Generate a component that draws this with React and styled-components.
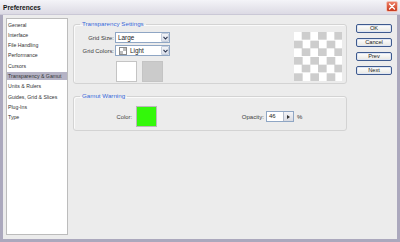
import React from 'react';
import styled, { createGlobalStyle } from 'styled-components';

const Global = createGlobalStyle`
  html, body { margin: 0; padding: 0; width: 400px; height: 242px; overflow: hidden; background: #aba8bd; }
  * { box-sizing: border-box; }
  body { font-family: "Liberation Sans", Arial, sans-serif; color: #3a3a3a; }
`;

const Window = styled.div`
  width: 400px;
  height: 242px;
  display: flex;
  flex-direction: column;
  background: #aba8bd;
`;

const TitleBar = styled.div`
  height: 15px;
  flex: none;
  display: flex;
  align-items: flex-start;
  justify-content: space-between;
  padding: 0 2px 0 3px;
  background: linear-gradient(#f4f4f8, #dcdae4);
  border-bottom: 1px solid #cac8d6;
`;

const Title = styled.span`
  font-weight: bold;
  font-size: 6.6px;
  line-height: 15px;
  color: #151515;
`;

const Close = styled.div`
  margin-top: 1px;
  width: 12px;
  height: 11px;
  border: 1px solid #f3c2b6;
  border-radius: 2px;
  background: linear-gradient(#ec7d66, #c8391d);
  display: flex;
  align-items: center;
  justify-content: center;
`;

const Body = styled.div`
  flex: 1;
  margin: 0 3px 3px;
  background: #ececec;
  display: flex;
  padding: 3px 5px 4px 3px;
`;

const Sidebar = styled.ul`
  list-style: none;
  margin: 0;
  width: 62px;
  flex: none;
  background: #fff;
  border: 1px solid #bcbcbc;
  padding: 1.5px 0 0;
  display: flex;
  flex-direction: column;
  gap: 2px;
`;

const Item = styled.li`
  height: 8.33px;
  line-height: 8.33px;
  font-size: 5.2px;
  padding-left: 1px;
  color: #333;
  white-space: nowrap;
  background: ${p => (p.$active ? '#b5b3c5' : 'transparent')};
`;

const Main = styled.div`
  width: 274px;
  margin-left: 5px;
  flex: none;
  padding-top: 2px;
  display: flex;
  flex-direction: column;
`;

const Group = styled.fieldset`
  margin: ${p => p.$gapTop || 0}px 0 0;
  padding: 0;
  border: 1px solid #d3d3d3;
  border-radius: 3px;
  box-shadow: inset 1px 1px 0 #fafafa;
  min-width: 0;
`;

const Legend = styled.legend`
  font-size: 6.2px;
  line-height: 8px;
  color: #3667d8;
  padding: 0 2px;
  margin-left: 6px;
`;

const GroupInner = styled.div`
  display: flex;
  align-items: flex-start;
  padding: ${p => p.$pad};
`;

const FormGrid = styled.div`
  display: grid;
  grid-template-columns: 40px 55px;
  column-gap: 1px;
  row-gap: 2px;
  align-items: center;
`;

const Label = styled.span`
  font-size: 5.9px;
  text-align: right;
  color: #404040;
  white-space: nowrap;
`;

const Select = styled.div`
  height: 11px;
  border: 1px solid #8fa6c4;
  background: #fff;
  display: flex;
  align-items: center;
  font-size: 6.4px;
  color: #222;
  padding-left: 2px;
  gap: 2px;
`;

const SelectText = styled.span`
  flex: 1;
  line-height: 9px;
`;

const Arrow = styled.div`
  width: 8px;
  height: 9px;
  background: linear-gradient(#f2f4f8, #d8dde8);
  border: 1px solid #c6cedc;
  border-radius: 1px;
  display: flex;
  align-items: center;
  justify-content: center;
`;

const MiniChecker = styled.span`
  width: 8px;
  height: 8px;
  margin-left: 1px;
  margin-right: 1px;
  border: 1px solid #8a8a8a;
  background: repeating-conic-gradient(#bdbdbd 0 25%, #fff 0 50%) 0 0 / 6px 6px;
`;

const Swatches = styled.div`
  grid-column: 2;
  margin-top: 3px;
  margin-left: 1px;
  display: flex;
  gap: 5px;
`;

const Swatch = styled.div`
  width: 21px;
  height: 21px;
  flex: none;
  border: 1px solid ${p => p.$edge || '#c4c4c4'};
  background: ${p => p.$color};
`;

const Preview = styled.div`
  margin-left: auto;
  width: 48px;
  height: 49px;
  background: repeating-conic-gradient(#cdcdcd 0 25%, #fff 0 50%) 0 0 / 16.33px 16.33px;
`;

const Row = styled.div`
  display: flex;
  align-items: center;
`;

const ColorLabel = styled(Label)`
  width: 58px;
  font-size: 5.8px;
`;

const OpacityLabel = styled(Label)`
  width: 26px;
  margin-left: 81px;
  font-size: 6.1px;
`;

const Spin = styled.div`
  margin-left: 2px;
  width: 28px;
  height: 11px;
  border: 1px solid #8fa6c4;
  background: #fff;
  display: flex;
  align-items: stretch;
  font-size: 6px;
  color: #222;
`;

const SpinValue = styled.span`
  flex: 1;
  padding-left: 2px;
  line-height: 9px;
`;

const SpinBtn = styled.div`
  width: 10px;
  background: linear-gradient(#f3f3f6, #d9dbe2);
  border-left: 1px solid #b4bccb;
  display: flex;
  align-items: center;
  justify-content: center;
`;

const Percent = styled.span`
  margin-left: 3px;
  font-size: 6px;
  color: #333;
`;

const Buttons = styled.div`
  margin-left: 9px;
  width: 36px;
  flex: none;
  padding-top: 6px;
  display: flex;
  flex-direction: column;
  gap: 5px;
`;

const Button = styled.button`
  height: 9px;
  width: 36px;
  padding: 0;
  margin: 0;
  border: 1px solid #3e5a8e;
  border-radius: 2px;
  background: linear-gradient(#ffffff, #e7e7e2);
  box-shadow: inset 0 0 0 1px #dfe6f3;
  font-family: "Liberation Sans", Arial, sans-serif;
  font-size: 5.7px;
  line-height: 7px;
  color: #222;
`;

const items = [
  'General',
  'Interface',
  'File Handling',
  'Performance',
  'Cursors',
  'Transparency & Gamut',
  'Units & Rulers',
  'Guides, Grid & Slices',
  'Plug-Ins',
  'Type',
];

const Chevron = () => (
  <svg width="5" height="4" viewBox="0 0 5 4">
    <path d="M0.5 0.8 L2.5 3 L4.5 0.8" stroke="#2a3550" strokeWidth="1.1" fill="none" />
  </svg>
);

export default function App() {
  return (
    <Window>
      <Global />
      <TitleBar>
        <Title>Preferences</Title>
        <Close>
          <svg width="8" height="7" viewBox="0 0 8 7">
            <path d="M1.5 1 L6.5 6 M6.5 1 L1.5 6" stroke="#fff" strokeWidth="1.4" strokeLinecap="round" />
          </svg>
        </Close>
      </TitleBar>
      <Body>
        <Sidebar>
          {items.map(t => (
            <Item key={t} $active={t === 'Transparency & Gamut'}>{t}</Item>
          ))}
        </Sidebar>
        <Main>
          <Group>
            <Legend>Transparency Settings</Legend>
            <GroupInner $pad="4px 4px 1px 0">
              <FormGrid>
                <Label>Grid Size:</Label>
                <Select>
                  <SelectText>Large</SelectText>
                  <Arrow><Chevron /></Arrow>
                </Select>
                <Label>Grid Colors:</Label>
                <Select>
                  <MiniChecker />
                  <SelectText>Light</SelectText>
                  <Arrow><Chevron /></Arrow>
                </Select>
                <Swatches>
                  <Swatch $color="#ffffff" />
                  <Swatch $color="#cbcbcb" />
                </Swatches>
              </FormGrid>
              <Preview />
            </GroupInner>
          </Group>
          <Group $gapTop={8}>
            <Legend>Gamut Warning</Legend>
            <GroupInner $pad="6px 4px 3px 0">
              <Row>
                <ColorLabel>Color:</ColorLabel>
                <Swatch $color="#33f80a" $edge="#b9b9b9" style={{ marginLeft: 4 }} />
                <OpacityLabel>Opacity:</OpacityLabel>
                <Spin>
                  <SpinValue>46</SpinValue>
                  <SpinBtn>
                    <svg width="3" height="4" viewBox="0 0 3 4">
                      <path d="M0 0 L3 2 L0 4 Z" fill="#333" />
                    </svg>
                  </SpinBtn>
                </Spin>
                <Percent>%</Percent>
              </Row>
            </GroupInner>
          </Group>
        </Main>
        <Buttons>
          <Button>OK</Button>
          <Button>Cancel</Button>
          <Button>Prev</Button>
          <Button>Next</Button>
        </Buttons>
      </Body>
    </Window>
  );
}
